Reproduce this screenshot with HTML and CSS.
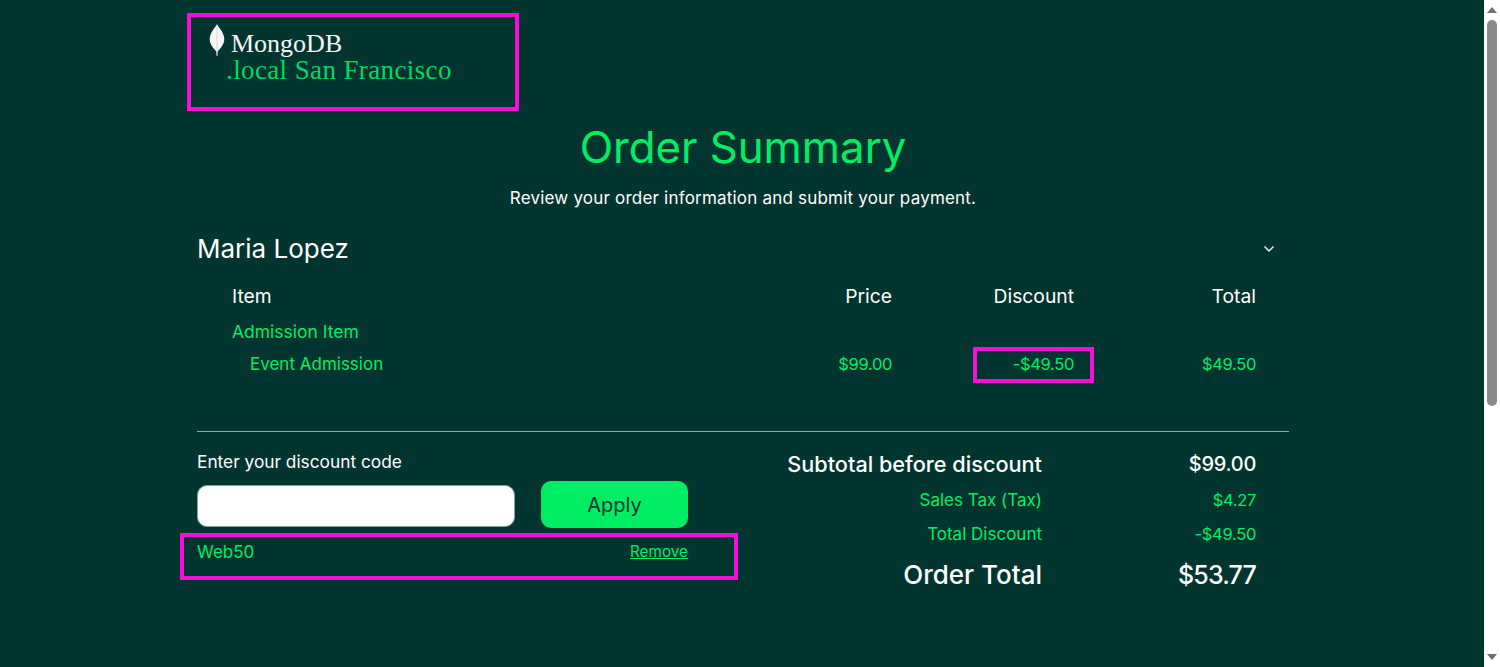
FILE: index.html
```html
<!DOCTYPE html>
<html lang="en">
<head>
<meta charset="utf-8">
<title>Order Summary</title>
<link rel="stylesheet" href="styles.css">
</head>
<body>
<div class="page">
  <main class="main">
    <div class="content">
      <header class="brand">
        <div class="brand-top">
          <svg class="leaf" viewBox="0 0 16 34" aria-hidden="true"><path d="M8 0C9 3 15 8 15.500 15C15.800 21 11 26 8.800 28L8.400 33H7.600L7.200 28C5 26 .2 21 .5 15C1 8 7 3 8 0Z" fill="#f4f7f6"/><path d="M8 3V28" stroke="#b9c9c5" stroke-width=".6"/></svg>
          <span class="brand-name">MongoDB</span>
        </div>
        <div class="brand-event">.local San Francisco</div>
        <div class="mark mark-logo"></div>
      </header>

      <h1 class="title">Order Summary</h1>
      <p class="subtitle">Review your order information and submit your payment.</p>

      <div class="attendee">
        <h2 class="attendee-name">Maria Lopez</h2>
        <svg class="chevron" viewBox="0 0 12 8" aria-hidden="true"><path d="M1.500 1.500L6 6L10.500 1.500" fill="none" stroke="#e8f3f0" stroke-width="1.500"/></svg>
      </div>

      <div class="items">
        <div class="row head">
          <span>Item</span><span class="num">Price</span><span class="num">Discount</span><span class="num">Total</span>
        </div>
        <div class="row green group"><span>Admission Item</span></div>
        <div class="row green line">
          <span class="sub-item">Event Admission</span>
          <span class="num">$99.00</span>
          <span class="num">-$49.50<i class="mark mark-disc"></i></span>
          <span class="num">$49.50</span>
        </div>
      </div>

      <hr class="rule">

      <section class="bottom">
        <div class="code">
          <label class="code-label" for="code">Enter your discount code</label>
          <div class="code-form">
            <input class="code-input" id="code" type="text">
            <button class="apply" type="button">Apply</button>
          </div>
          <div class="applied">
            <span class="applied-code">Web50</span>
            <a class="remove" href="#">Remove</a>
            <div class="mark mark-code"></div>
          </div>
        </div>
        <div class="totals">
          <div class="t-row t-strong"><span>Subtotal before discount</span><span>$99.00</span></div>
          <div class="t-row t-green"><span>Sales Tax (Tax)</span><span>$4.27</span></div>
          <div class="t-row t-green"><span>Total Discount</span><span>-$49.50</span></div>
          <div class="t-row t-grand"><span>Order Total</span><span>$53.77</span></div>
        </div>
      </section>
    </div>
  </main>
  <div class="scrollbar" aria-hidden="true">
    <span class="arrow up"></span>
    <span class="thumb"></span>
    <span class="arrow down"></span>
  </div>
</div>
</body>
</html>
```
FILE: styles.css
```css
* { box-sizing: border-box; }
html, body { margin: 0; height: 100%; overflow: hidden; }
body { font-family: Inter, "Liberation Sans", sans-serif; color: #fff; background: #023430; }
.page { display: flex; height: 667px; }
.main { flex: 1; min-width: 0; padding-left: 197px; }
.content { width: 1092px; }

.brand { position: relative; height: 97px; margin-top: 13px; padding: 11px 0 0 12px; font-family: "Liberation Serif", serif; }
.brand-top { display: flex; align-items: flex-start; gap: 6px; height: 36px; }
.leaf { width: 16px; height: 33px; }
.brand-name { font-size: 26px; line-height: 26px; margin-top: 7px; color: #f2f6f5; }
.brand-event { font-size: 27px; line-height: 26px; letter-spacing: .38px; margin-top: -3px; margin-left: 17px; color: #00d860; }

.mark { position: absolute; border: 4px solid #f60fd8; pointer-events: none; }
.mark-logo { left: -10px; top: 0; width: 332px; height: 98px; }
.mark-disc { right: -20px; top: -7px; width: 121px; height: 36px; }
.mark-code { left: -17px; top: -7px; width: 558px; height: 47px; }

.title { margin: 11px 0 0; font-size: 43.700px; line-height: 54px; font-weight: 400; text-align: center; color: #00ed64; }
.subtitle { margin: 11px 0 0; font-size: 17px; letter-spacing: .2px; line-height: 24px; text-align: center; }

.attendee { display: flex; justify-content: space-between; align-items: center; margin-top: 22px; padding-right: 14px; height: 34px; }
.attendee-name { margin: 0; font-size: 26px; font-weight: 400; line-height: 34px; }
.chevron { width: 12px; height: 8px; }

.items { padding: 0 33px 0 35px; margin-top: 17px; }
.row { display: grid; grid-template-columns: 1fr 140px 182px 182px; align-items: center; }
.num { position: relative; text-align: right; }
.head { height: 26px; font-size: 19.300px; }
.green { color: #00ed64; font-size: 17px; }
.green .num { font-size: 16.500px; letter-spacing: -.35px; }
.group { height: 26px; margin-top: 9px; font-size: 17.500px; }
.line { height: 26px; margin-top: 7px; }
.sub-item { padding-left: 18px; }

.rule { height: 1px; margin: 54px 0 0; border: 0; background: #8fa8a1; }

.bottom { display: flex; justify-content: space-between; padding-right: 33px; margin-top: 18px; }
.code { width: 491px; }
.code-label { display: block; font-size: 17.300px; line-height: 24px; }
.code-form { display: flex; justify-content: space-between; align-items: flex-end; margin-top: 7px; }
.code-input { width: 318px; height: 42px; margin-bottom: 1px; border: 1px solid #7fa69c; border-radius: 10px; background: #fff; }
.apply { width: 147px; height: 47px; border: 0; border-radius: 10px; background: #00ed64; color: #023430; font: 400 20px Inter, sans-serif; }
.applied { position: relative; display: flex; justify-content: space-between; align-items: center; margin-top: 12px; height: 24px; }
.applied-code { color: #00ed64; font-size: 17px; }
.remove { color: #00ed64; font-size: 15.300px; margin-top: -2px; }

.totals { width: 469px; }
.t-row { display: flex; justify-content: space-between; }
.t-row span:first-child { width: 255px; white-space: nowrap; text-align: right; }
.t-row span:last-child { letter-spacing: -.3px; }
.t-strong { font-size: 21.700px; font-weight: 500; line-height: 28px; }
.t-strong span:first-child { display: flex; justify-content: flex-end; }
.t-strong span:last-child { font-size: 20px; }
.t-green { color: #00ed64; font-size: 17px; line-height: 24px; margin-top: 10px; }
.t-green span:last-child { font-size: 16.500px; }
.t-grand { font-size: 26px; font-weight: 500; line-height: 34px; margin-top: 12px; }
.t-grand span:last-child { font-size: 25px; letter-spacing: -.8px; }

.scrollbar { width: 16px; display: flex; flex-direction: column; align-items: center; background: #fff; padding: 7px 0; }
.thumb { width: 10px; height: 386px; margin-top: 7px; border-radius: 5px; background: #8a8a8a; }
.arrow { width: 0; height: 0; border-left: 5px solid transparent; border-right: 5px solid transparent; }
.arrow.up { border-bottom: 6px solid #6f6f6f; }
.arrow.down { border-top: 6px solid #6f6f6f; margin-top: auto; }
```
